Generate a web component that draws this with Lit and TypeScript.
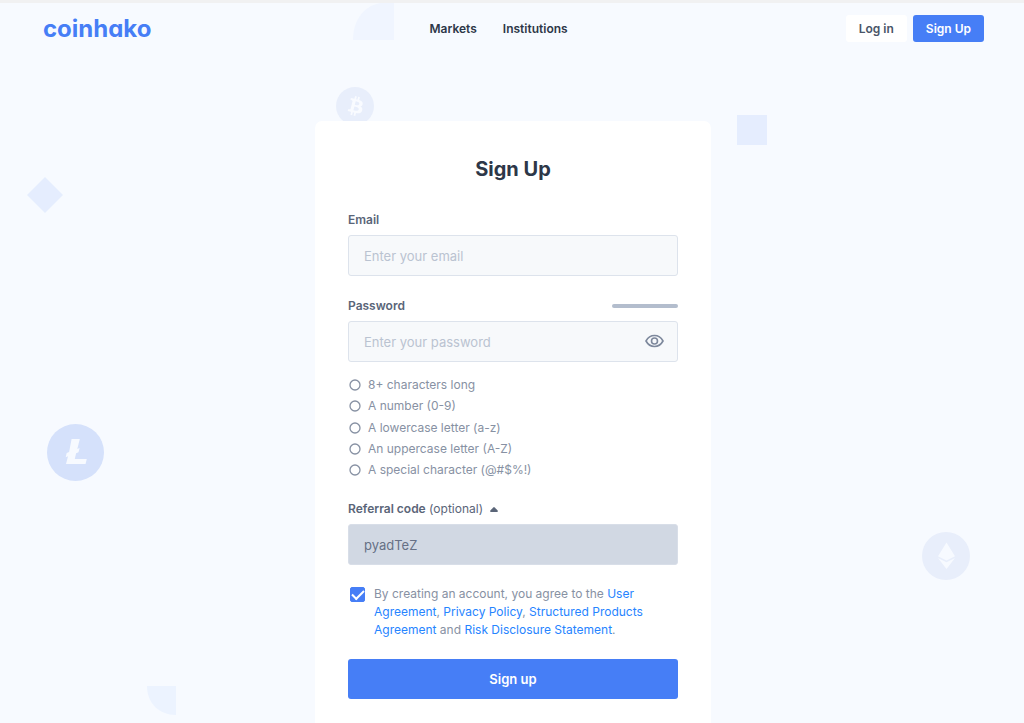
import { LitElement, html, css, svg } from "lit";
import { customElement, state } from "lit/decorators.js";

const RULES = [
  "8+ characters long",
  "A number (0-9)",
  "A lowercase letter (a-z)",
  "An uppercase letter (A-Z)",
  "A special character (@#$%!)",
];

const bitcoin = svg`
  <circle cx="19" cy="19" r="19" fill="#e8eefb"/>
  <path transform="translate(3.5 3)" fill="#f9fbff" d="M23.189 14.02c.314-2.096-1.283-3.223-3.465-3.975l.708-2.84-1.728-.43-.69 2.765c-.454-.114-.92-.22-1.385-.326l.695-2.783L15.596 6l-.708 2.839c-.376-.086-.746-.17-1.104-.26l.002-.009-2.384-.595-.46 1.846s1.283.294 1.256.312c.7.175.826.638.805 1.006l-.806 3.235c.048.012.11.03.18.057l-.183-.045-1.13 4.532c-.086.212-.303.531-.793.41.018.025-1.256-.313-1.256-.313l-.858 1.978 2.25.561c.418.105.828.215 1.231.318l-.715 2.872 1.727.43.708-2.84c.472.127.93.245 1.378.357l-.706 2.828 1.728.43.715-2.866c2.948.558 5.164.333 6.097-2.333.752-2.146-.037-3.385-1.588-4.192 1.13-.26 1.98-1.003 2.207-2.538zm-3.95 5.538c-.533 2.147-4.148.986-5.32.695l.95-3.805c1.172.293 4.929.872 4.37 3.11zm.535-5.569c-.487 1.953-3.495.96-4.47.717l.86-3.45c.975.243 4.118.696 3.61 2.733z"/>`;

const litecoin = svg`
  <circle cx="28.5" cy="28.5" r="28.5" fill="#d5e1fb"/>
  <path fill="#f7faff" d="M24.600 15h8.200l-2.500 10 2.300-1-1.100 4.300-2.400 1-1.300 5.600h12L38.500 40H19l2-7.700-2.300.9 1-4.300 2.400-1z"/>`;

const ethereum = svg`
  <circle cx="24" cy="24" r="24" fill="#e8eefb"/>
  <path fill="#f7faff" d="M24.500 10.500 33 24.200l-8.500 4.400-8.500-4.400zM16 26l8.500 4.300L33 26l-8.500 11z"/>`;

@customElement("app-root")
export class AppRoot extends LitElement {
  @state() private showPassword = false;
  @state() private showReferral = true;

  static styles = css`
    :host {
      display: block;
      font-family: Inter, "Liberation Sans", sans-serif;
      color: #2d3748;
    }
    * { box-sizing: border-box; }
    a { text-decoration: none; }
    button, input { font-family: inherit; }
    button { cursor: pointer; }
    .page {
      position: relative;
      min-height: 100vh;
      padding-left: 2px;
      overflow: hidden;
      background: #f7faff;
      border-top: 3px solid #f1f1f2;
    }
    .shape { position: absolute; display: block; }
    .quarter-top { left: 353px; top: 0; }
    .bitcoin { left: 336px; top: 84px; }
    .square { left: 737px; top: 112px; width: 30px; height: 30px; background: #e5edfe; }
    .diamond { left: 27px; top: 174px; }
    .litecoin { left: 47px; top: 421px; }
    .ethereum { left: 922px; top: 529px; }
    .quarter-bottom { left: 147px; top: 683px; }

    header {
      position: relative;
      display: flex;
      align-items: center;
      justify-content: space-between;
      padding: 12px 40px 0 41px;
    }
    .logo {
      color: #467ef6;
      font-size: 24px;
      line-height: 27px;
      font-weight: 700;
      font-feature-settings: "cv11";
    }
    nav { display: flex; gap: 26px; }
    nav a { color: #2d3748; font-size: 12px; line-height: 27px; font-weight: 600; }
    .actions { display: flex; gap: 6px; }
    .action {
      padding: 0 13px;
      border-radius: 3px;
      font-size: 12px;
      line-height: 27px;
      font-weight: 600;
    }
    .login { background: #fff; color: #4a5568; }
    .join { background: #467ef6; color: #fff; }

    main { position: relative; padding-top: 79px; }
    .card {
      width: 396px;
      max-width: 100%;
      margin: 0 auto;
      padding: 35px 33px 40px;
      border-radius: 7px;
      background: #fff;
    }
    h1 {
      margin: 0 0 29px;
      text-align: center;
      font-size: 20px;
      line-height: 27px;
      font-weight: 700;
    }
    .label-row {
      display: flex;
      align-items: center;
      justify-content: space-between;
      margin-bottom: 7px;
      font-size: 12px;
      line-height: 16px;
      font-weight: 600;
      color: #5a6578;
    }
    .strength { width: 66px; height: 4px; border-radius: 2px; background: #b3bdcd; }
    .field { margin-bottom: 22px; }
    .field.code { margin-bottom: 20px; }
    .control { position: relative; }
    .text {
      display: block;
      width: 100%;
      height: 41px;
      padding: 0 15px;
      border: 1px solid #dde3ec;
      border-radius: 3px;
      background: #f7f9fb;
      color: #5a6578;
      font-size: 13px;
      outline: none;
    }
    .text::placeholder { color: #bac3d1; opacity: 1; }
    .text.locked { background: #d1d8e3; border-color: #d8dee8; color: #667085; }
    .eye {
      position: absolute;
      right: 14px;
      top: 11px;
      display: flex;
      padding: 0;
      border: 0;
      background: none;
    }
    ul {
      display: flex;
      flex-direction: column;
      justify-content: space-between;
      height: 103px;
      list-style: none;
      margin: 14px 0 0;
      padding: 0;
    }
    li {
      display: flex;
      align-items: center;
      gap: 7px;
      padding-left: 1px;
      font-size: 12px;
      line-height: 18px;
      color: #8791a3;
    }
    .referral {
      display: flex;
      align-items: center;
      gap: 7px;
      margin-bottom: 7px;
      padding: 0;
      border: 0;
      background: none;
      font-size: 12px;
      line-height: 16px;
      color: #5a6578;
    }
    .referral span { font-weight: 400; }
    .referral strong { font-weight: 600; }
    .agree { display: flex; gap: 9px; padding-left: 2px; margin-bottom: 20px; }
    .tick {
      appearance: none;
      flex: none;
      display: grid;
      place-items: center;
      width: 15px;
      height: 15px;
      margin: 2px 0 0;
      border: 1px solid #467ef6;
      border-radius: 2px;
      background: #fff;
    }
    .tick:checked { background: #467ef6; }
    .tick:checked::before {
      content: "";
      width: 10px;
      height: 5px;
      border: solid #fff;
      border-width: 0 0 2px 2px;
      transform: translateY(-1px) rotate(-45deg);
    }
    .agree label { font-size: 12px; line-height: 18px; color: #8791a3; }
    .agree a { color: #2684ff; }
    .submit {
      display: block;
      width: 100%;
      height: 40px;
      border: 0;
      border-radius: 3px;
      background: #467ef6;
      color: #fff;
      font-size: 13px;
      font-weight: 600;
    }
  `;

  render() {
    return html`
      <div class="page">
        <svg class="shape quarter-top" width="41" height="37" aria-hidden="true"><path fill="#f0f5ff" d="M0 37C0 17 11 3 27 0h14v37z"/></svg>
        <svg class="shape bitcoin" width="39" height="39" aria-hidden="true">${bitcoin}</svg>
        <div class="shape square"></div>
        <svg class="shape diamond" width="36" height="36" aria-hidden="true"><path fill="#e5edfe" d="M18 0l18 18-18 18L0 18z"/></svg>
        <svg class="shape litecoin" width="57" height="57" aria-hidden="true">${litecoin}</svg>
        <svg class="shape ethereum" width="48" height="48" aria-hidden="true">${ethereum}</svg>
        <svg class="shape quarter-bottom" width="29" height="29" aria-hidden="true"><path fill="#ecf3ff" d="M0 0h29v29C12 29 0 17 0 0z"/></svg>

        <header>
          <a class="logo" href="#">coinhako</a>
          <nav>
            <a href="#markets">Markets</a>
            <a href="#institutions">Institutions</a>
          </nav>
          <div class="actions">
            <a class="action login" href="#login">Log in</a>
            <a class="action join" href="#signup">Sign Up</a>
          </div>
        </header>

        <main>
          <form class="card" @submit=${(e: Event) => e.preventDefault()}>
            <h1>Sign Up</h1>
            <div class="field">
              <div class="label-row"><label for="email">Email</label></div>
              <input class="text" id="email" type="email" placeholder="Enter your email">
            </div>
            <div class="field">
              <div class="label-row">
                <label for="password">Password</label>
                <div class="strength"></div>
              </div>
              <div class="control">
                <input class="text" id="password" type=${this.showPassword ? "text" : "password"} placeholder="Enter your password">
                <button class="eye" type="button" aria-label="Show password"
                  @click=${() => (this.showPassword = !this.showPassword)}>
                  <svg width="19" height="18" viewBox="0 0 19 18" fill="none" stroke="#7d889c" stroke-width="1.6">
                    <path d="M1 9C3 5.300 6 3.500 9.500 3.500S16 5.300 18 9c-2 3.700-5 5.500-8.500 5.500S3 12.700 1 9z"/>
                    <circle cx="9.500" cy="9" r="3"/>
                  </svg>
                </button>
              </div>
              <ul>
                ${RULES.map((rule) => html`<li>
                  <svg width="12" height="12" aria-hidden="true"><circle cx="6" cy="6" r="5" fill="none" stroke="#8791a3" stroke-width="1.300"/></svg>
                  ${rule}
                </li>`)}
              </ul>
            </div>
            <div class="field code">
              <button class="referral" type="button" aria-expanded=${this.showReferral}
                @click=${() => (this.showReferral = !this.showReferral)}>
                <span><strong>Referral code</strong> (optional)</span>
                <svg width="8" height="5" aria-hidden="true"><path fill="#5a6578" d="M3.300.4q.7-.6 1.400 0L7.700 3.500Q8.300 5 7 5H1Q-.3 5 .3 3.500z"/></svg>
              </button>
              ${this.showReferral
                ? html`<input class="text locked" aria-label="Referral code" readonly value="pyadTeZ">`
                : null}
            </div>
            <div class="agree">
              <input class="tick" id="agree" type="checkbox" checked>
              <label for="agree">By creating an account, you agree to the <a href="#user">User Agreement</a>, <a href="#privacy">Privacy Policy</a>, <a href="#products">Structured Products Agreement</a> and <a href="#risk">Risk Disclosure Statement</a>.</label>
            </div>
            <button class="submit" type="submit">Sign up</button>
          </form>
        </main>
      </div>
    `;
  }
}
